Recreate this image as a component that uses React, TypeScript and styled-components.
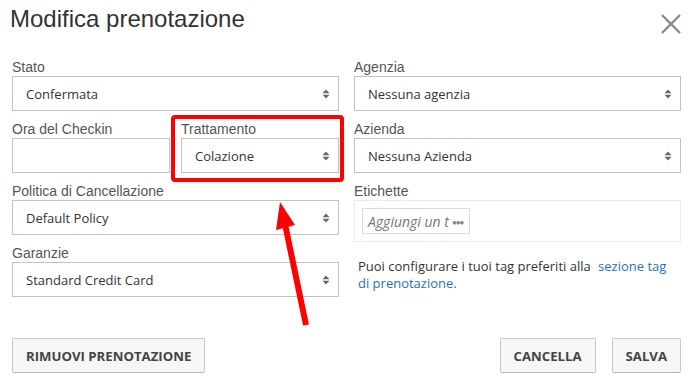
import React, { useState } from 'react';
import styled, { createGlobalStyle } from 'styled-components';

const GlobalStyle = createGlobalStyle`
  html, body {
    margin: 0;
    padding: 0;
    background: #ffffff;
  }
  * {
    box-sizing: border-box;
  }
`;

const Dialog = styled.div`
  position: relative;
  width: 692px;
  height: 382px;
  padding: 0 11px 0 12px;
  background: #ffffff;
  font-family: 'Open Sans', sans-serif;
  color: #333333;
  overflow: hidden;
`;

const Header = styled.div`
  display: flex;
  justify-content: space-between;
  align-items: flex-start;
  padding-top: 5px;
`;

const Title = styled.h2`
  margin: 0 0 0 -2px;
  font-family: 'Liberation Sans', Arial, sans-serif;
  font-size: 24px;
  font-weight: 400;
  line-height: 28px;
  color: #333333;
`;

const CloseButton = styled.button`
  width: 24px;
  height: 24px;
  margin: 7px -2px 0 0;
  padding: 0;
  border: 0;
  background: transparent;
  cursor: pointer;
  display: flex;
  align-items: center;
  justify-content: center;
`;

const FormGrid = styled.div`
  display: grid;
  grid-template-columns: 1fr 1fr;
  column-gap: 15px;
  margin-top: 23px;
  align-items: start;
`;

const Column = styled.div`
  display: flex;
  flex-direction: column;
  gap: 10px;
`;

const Pair = styled.div`
  display: grid;
  grid-template-columns: 1fr 1fr;
  column-gap: 11px;
`;

const Field = styled.div<{ $highlight?: boolean }>`
  position: relative;
  display: flex;
  flex-direction: column;

  ${({ $highlight }) =>
    $highlight &&
    `
    &::after {
      content: '';
      position: absolute;
      left: -10px;
      right: -5px;
      top: -6px;
      bottom: -9px;
      border: 4px solid #ff0000;
      border-radius: 4px;
      pointer-events: none;
    }
  `}
`;

const Label = styled.label`
  font-family: 'Liberation Sans', Arial, sans-serif;
  font-size: 14px;
  line-height: 17px;
  color: #555555;
`;

const SelectWrap = styled.div`
  position: relative;
`;

const Select = styled.select`
  display: block;
  width: 100%;
  height: 35px;
  padding: 0 30px 0 13px;
  border: 1px solid #c2c2c2;
  border-radius: 0;
  background: #ffffff;
  font-family: 'Open Sans', sans-serif;
  font-size: 13px;
  color: #333333;
  appearance: none;
  -webkit-appearance: none;
  outline: none;
`;

const Caret = styled.svg`
  position: absolute;
  right: 9px;
  top: 50%;
  margin-top: -5px;
  pointer-events: none;
`;

const TextInput = styled.input`
  display: block;
  width: 100%;
  height: 35px;
  padding: 0 13px;
  border: 1px solid #c2c2c2;
  font-family: 'Open Sans', sans-serif;
  font-size: 13px;
  outline: none;
`;

const TagBox = styled.div`
  height: 42px;
  padding: 7px 7px;
  border: 1px solid #ececec;
`;

const TagInput = styled.div`
  display: inline-flex;
  align-items: center;
  width: 108px;
  height: 26px;
  padding: 0 5px;
  border: 1px solid #dcdcdc;
  font-family: 'Open Sans', sans-serif;
  font-style: italic;
  font-size: 14px;
  color: #777777;
  white-space: nowrap;
  overflow: hidden;
`;

const Dots = styled.span`
  margin-left: 3px;
  font-style: normal;
  font-size: 8px;
  letter-spacing: -1px;
  color: #888888;
`;

const HelpText = styled.p`
  margin: 6px 0 0 4px;
  font-size: 13px;
  line-height: 17px;
  color: #333333;

  a {
    margin-left: 4px;
    color: #2f6db5;
    text-decoration: none;
  }
`;

const Footer = styled.div`
  display: flex;
  justify-content: space-between;
  margin-top: 41px;
`;

const ButtonGroup = styled.div`
  display: flex;
  gap: 16px;
`;

const Button = styled.button`
  height: 35px;
  padding: 0 13px;
  border: 1px solid #c9c9c9;
  border-bottom-color: #b9b9b9;
  border-radius: 2px;
  background: #f6f6f6;
  font-family: 'Open Sans', sans-serif;
  font-size: 13.2px;
  font-weight: 700;
  text-transform: uppercase;
  color: #444444;
  cursor: pointer;
`;

const Pointer = styled.svg`
  position: absolute;
  left: 0;
  top: 0;
  pointer-events: none;
`;

function SelectField({
  label,
  options,
  highlight,
}: {
  label: string;
  options: string[];
  highlight?: boolean;
}) {
  const [value, setValue] = useState(options[0]);
  return (
    <Field $highlight={highlight}>
      <Label>{label}</Label>
      <SelectWrap>
        <Select value={value} onChange={({ target }) => setValue(target.value)}>
          {options.map((option) => (
            <option key={option}>{option}</option>
          ))}
        </Select>
        <Caret width="8" height="10" viewBox="0 0 8 10">
          <path d="M4 0.5 L7.5 4.3 L0.5 4.3 Z" fill="#666" />
          <path d="M4 9.5 L7.5 5.7 L0.5 5.7 Z" fill="#666" />
        </Caret>
      </SelectWrap>
    </Field>
  );
}

export default function App() {
  return (
    <>
      <GlobalStyle />
      <Dialog>
        <Header>
          <Title>Modifica prenotazione</Title>
          <CloseButton aria-label="Chiudi">
            <svg width="22" height="22" viewBox="0 0 22 22">
              <path
                d="M2 2 L20 20 M20 2 L2 20"
                stroke="#8a8a8a"
                strokeWidth="2.4"
                fill="none"
              />
            </svg>
          </CloseButton>
        </Header>

        <FormGrid>
          <Column>
            <SelectField label="Stato" options={['Confermata', 'Opzionata', 'Cancellata']} />
            <Pair>
              <Field>
                <Label>Ora del Checkin</Label>
                <TextInput type="text" />
              </Field>
              <SelectField
                label="Trattamento"
                options={['Colazione', 'Mezza pensione', 'Pensione completa']}
                highlight
              />
            </Pair>
            <SelectField label="Politica di Cancellazione" options={['Default Policy']} />
            <SelectField label="Garanzie" options={['Standard Credit Card']} />
          </Column>

          <Column>
            <SelectField label="Agenzia" options={['Nessuna agenzia']} />
            <SelectField label="Azienda" options={['Nessuna Azienda']} />
            <Field>
              <Label>Etichette</Label>
              <TagBox>
                <TagInput>
                  Aggiungi un t<Dots>●●●</Dots>
                </TagInput>
              </TagBox>
            </Field>
            <HelpText>
              Puoi configurare i tuoi tag preferiti alla{' '}
              <a href="#">
                sezione tag
                <br />
                di prenotazione.
              </a>
            </HelpText>
          </Column>
        </FormGrid>

        <Footer>
          <Button>Rimuovi prenotazione</Button>
          <ButtonGroup>
            <Button>Cancella</Button>
            <Button>Salva</Button>
          </ButtonGroup>
        </Footer>

        <Pointer width="692" height="382" viewBox="0 0 692 382">
          <line x1="306" y1="325" x2="285" y2="224" stroke="#ff0000" strokeWidth="6" />
          <polygon points="280,202 295,225 276,230" fill="#ff0000" />
        </Pointer>
      </Dialog>
    </>
  );
}
